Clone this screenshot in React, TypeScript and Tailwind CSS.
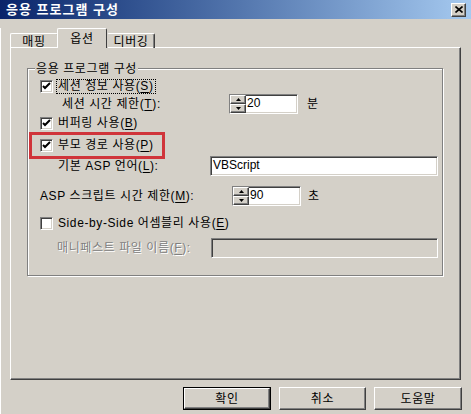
import React from "react";

const sunken =
  "border border-t-[#808080] border-l-[#808080] border-b-white border-r-white shadow-[inset_1px_1px_0_#404040,inset_-1px_-1px_0_#d4d0c8]";
const raised =
  "border border-t-white border-l-white border-b-[#404040] border-r-[#404040] shadow-[inset_-1px_-1px_0_#808080]";

function CheckBox({ checked }: { checked?: boolean }) {
  return (
    <span className={`flex h-[13px] w-[13px] shrink-0 items-center justify-center bg-white ${sunken}`}>
      {checked && (
        <svg width="9" height="9" viewBox="0 0 9 9">
          <path d="M1 4 L3 6 L8 1" fill="none" stroke="#000" strokeWidth="2" />
        </svg>
      )}
    </span>
  );
}

function Key({ k }: { k: string }) {
  return (
    <>
      (<span className="underline underline-offset-2">{k}</span>)
    </>
  );
}

function Spinner({ value }: { value: string }) {
  return (
    <div className={`flex h-[20px] w-[69px] items-stretch bg-white tracking-normal ${sunken}`}>
      <div className="flex w-[16px] flex-col">
        <span className={`flex flex-1 items-center justify-center bg-[#d4d0c8] ${raised}`}>
          <svg width="5" height="3" viewBox="0 0 5 3">
            <path d="M2.5 0 L5 3 L0 3 Z" fill="#000" />
          </svg>
        </span>
        <span className={`flex flex-1 items-center justify-center bg-[#d4d0c8] ${raised}`}>
          <svg width="5" height="3" viewBox="0 0 5 3">
            <path d="M0 0 L5 0 L2.5 3 Z" fill="#000" />
          </svg>
        </span>
      </div>
      <span className="pl-[1px] leading-[17px]">{value}</span>
    </div>
  );
}

export default function App() {
  return (
    <div className="relative h-[414px] w-[471px] overflow-hidden bg-[#d4d0c8] font-['Liberation_Sans','Noto_Sans_CJK_KR',sans-serif] text-[12px] tracking-[0.6px] text-black">
      {/* title bar */}
      <div className="flex h-[19px] items-center justify-between bg-gradient-to-r from-[#0a246a] to-[#a6caf0] pl-[6px] pr-[5px]">
        <span className="font-bold text-[13px] tracking-[1px] text-white">응용 프로그램 구성</span>
        <span className={`flex h-[14px] w-[15px] items-center justify-center bg-[#d4d0c8] ${raised}`}>
          <svg width="8" height="7" viewBox="0 0 8 7">
            <path d="M0.5 0.5 L7.5 6.5 M7.5 0.5 L0.5 6.5" stroke="#000" strokeWidth="1.6" />
          </svg>
        </span>
      </div>

      <div className="h-[395px] border-l border-l-white pl-[9px]">
        {/* tabs */}
        <div className="relative z-10 mb-[-1px] mt-[9px] flex h-[20px] items-end">
          <div className="flex h-[15px] w-[48px] items-center justify-center rounded-t-[2px] border border-b-0 border-t-white border-l-white border-r-[#404040] pt-[1px]">
            매핑
          </div>
          <div className="ml-[-1px] flex h-[20px] w-[50px] items-start justify-center rounded-t-[2px] border border-b-0 border-t-white border-l-white border-r-[#404040] bg-[#d4d0c8] pt-[1px]">
            옵션
          </div>
          <div className="flex h-[15px] w-[48px] items-center justify-center rounded-t-[2px] border border-b-0 border-t-white border-l-[#d4d0c8] border-r-[#404040] shadow-[inset_-1px_0_0_#808080] pt-[1px]">
            디버깅
          </div>
        </div>

        {/* panel */}
        <div className="h-[333px] w-[451px] border border-t-white border-l-white border-b-[#404040] border-r-[#404040] pl-[16px] pt-[20px] shadow-[inset_-1px_-1px_0_#808080]">
          <div className="relative h-[208px] w-[416px] border border-[#808080] pl-[12px] pt-[9px] shadow-[inset_1px_1px_0_#fff,1px_1px_0_#fff]">
            <span className="absolute left-[7px] top-[-9px] bg-[#d4d0c8] px-[1px]">응용 프로그램 구성</span>

            <div className="flex h-[16px] items-center">
              <CheckBox checked />
              <span className="ml-[3px] border border-dotted border-black px-[1px] leading-[13px]">
                세션 정보 사용<Key k="S" />
              </span>
            </div>

            <div className="flex h-[20px] items-center">
              <span className="ml-[22px] w-[167px]">
                세션 시간 제한<Key k="T" />:
              </span>
              <Spinner value="20" />
              <span className="ml-[9px]">분</span>
            </div>

            <div className="mt-[1px] flex h-[16px] items-center">
              <CheckBox checked />
              <span className="ml-[5px]">
                버퍼링 사용<Key k="B" />
              </span>
            </div>

            <div className="mt-[6px] flex h-[16px] items-center">
              <CheckBox checked />
              <span className="ml-[5px]">
                부모 경로 사용<Key k="P" />
              </span>
            </div>

            <div className="mt-[3px] flex h-[20px] items-center">
              <span className="ml-[18px] w-[152px]">
                기본 ASP 언어<Key k="L" />:
              </span>
              <div className={`h-[20px] w-[228px] bg-white pl-[2px] leading-[17px] tracking-normal ${sunken}`}>VBScript</div>
            </div>

            <div className="mt-[10px] flex h-[20px] items-center">
              <span className="w-[192px]">
                ASP 스크립트 시간 제한<Key k="M" />:
              </span>
              <Spinner value="90" />
              <span className="ml-[7px]">초</span>
            </div>

            <div className="mt-[9px] flex h-[16px] items-center">
              <CheckBox />
              <span className="ml-[5px]">
                Side-by-Side 어셈블리 사용<Key k="E" />
              </span>
            </div>

            <div className="mt-[7px] flex h-[20px] items-center">
              <span className="ml-[17px] w-[154px] text-[#808080] [text-shadow:1px_1px_0_#fff]">
                매니페스트 파일 이름<Key k="F" />:
              </span>
              <div className={`h-[20px] w-[227px] bg-[#d4d0c8] ${sunken}`} />
            </div>
          </div>
        </div>

        {/* buttons */}
        <div className="mt-[7px] flex justify-end gap-[8px] pr-[9px]">
          <button className="h-[23px] w-[88px] border border-black bg-[#d4d0c8] p-0">
            <span className={`flex h-full w-full items-center justify-center ${raised}`}>확인</span>
          </button>
          <button className={`flex h-[23px] w-[87px] items-center justify-center bg-[#d4d0c8] ${raised}`}>취소</button>
          <button className={`flex h-[23px] w-[88px] items-center justify-center bg-[#d4d0c8] ${raised}`}>도움말</button>
        </div>
      </div>

      {/* red highlight */}
      <div className="absolute left-[29px] top-[132px] h-[27px] w-[136px] border-[3px] border-[#d0343a]" />
    </div>
  );
}
